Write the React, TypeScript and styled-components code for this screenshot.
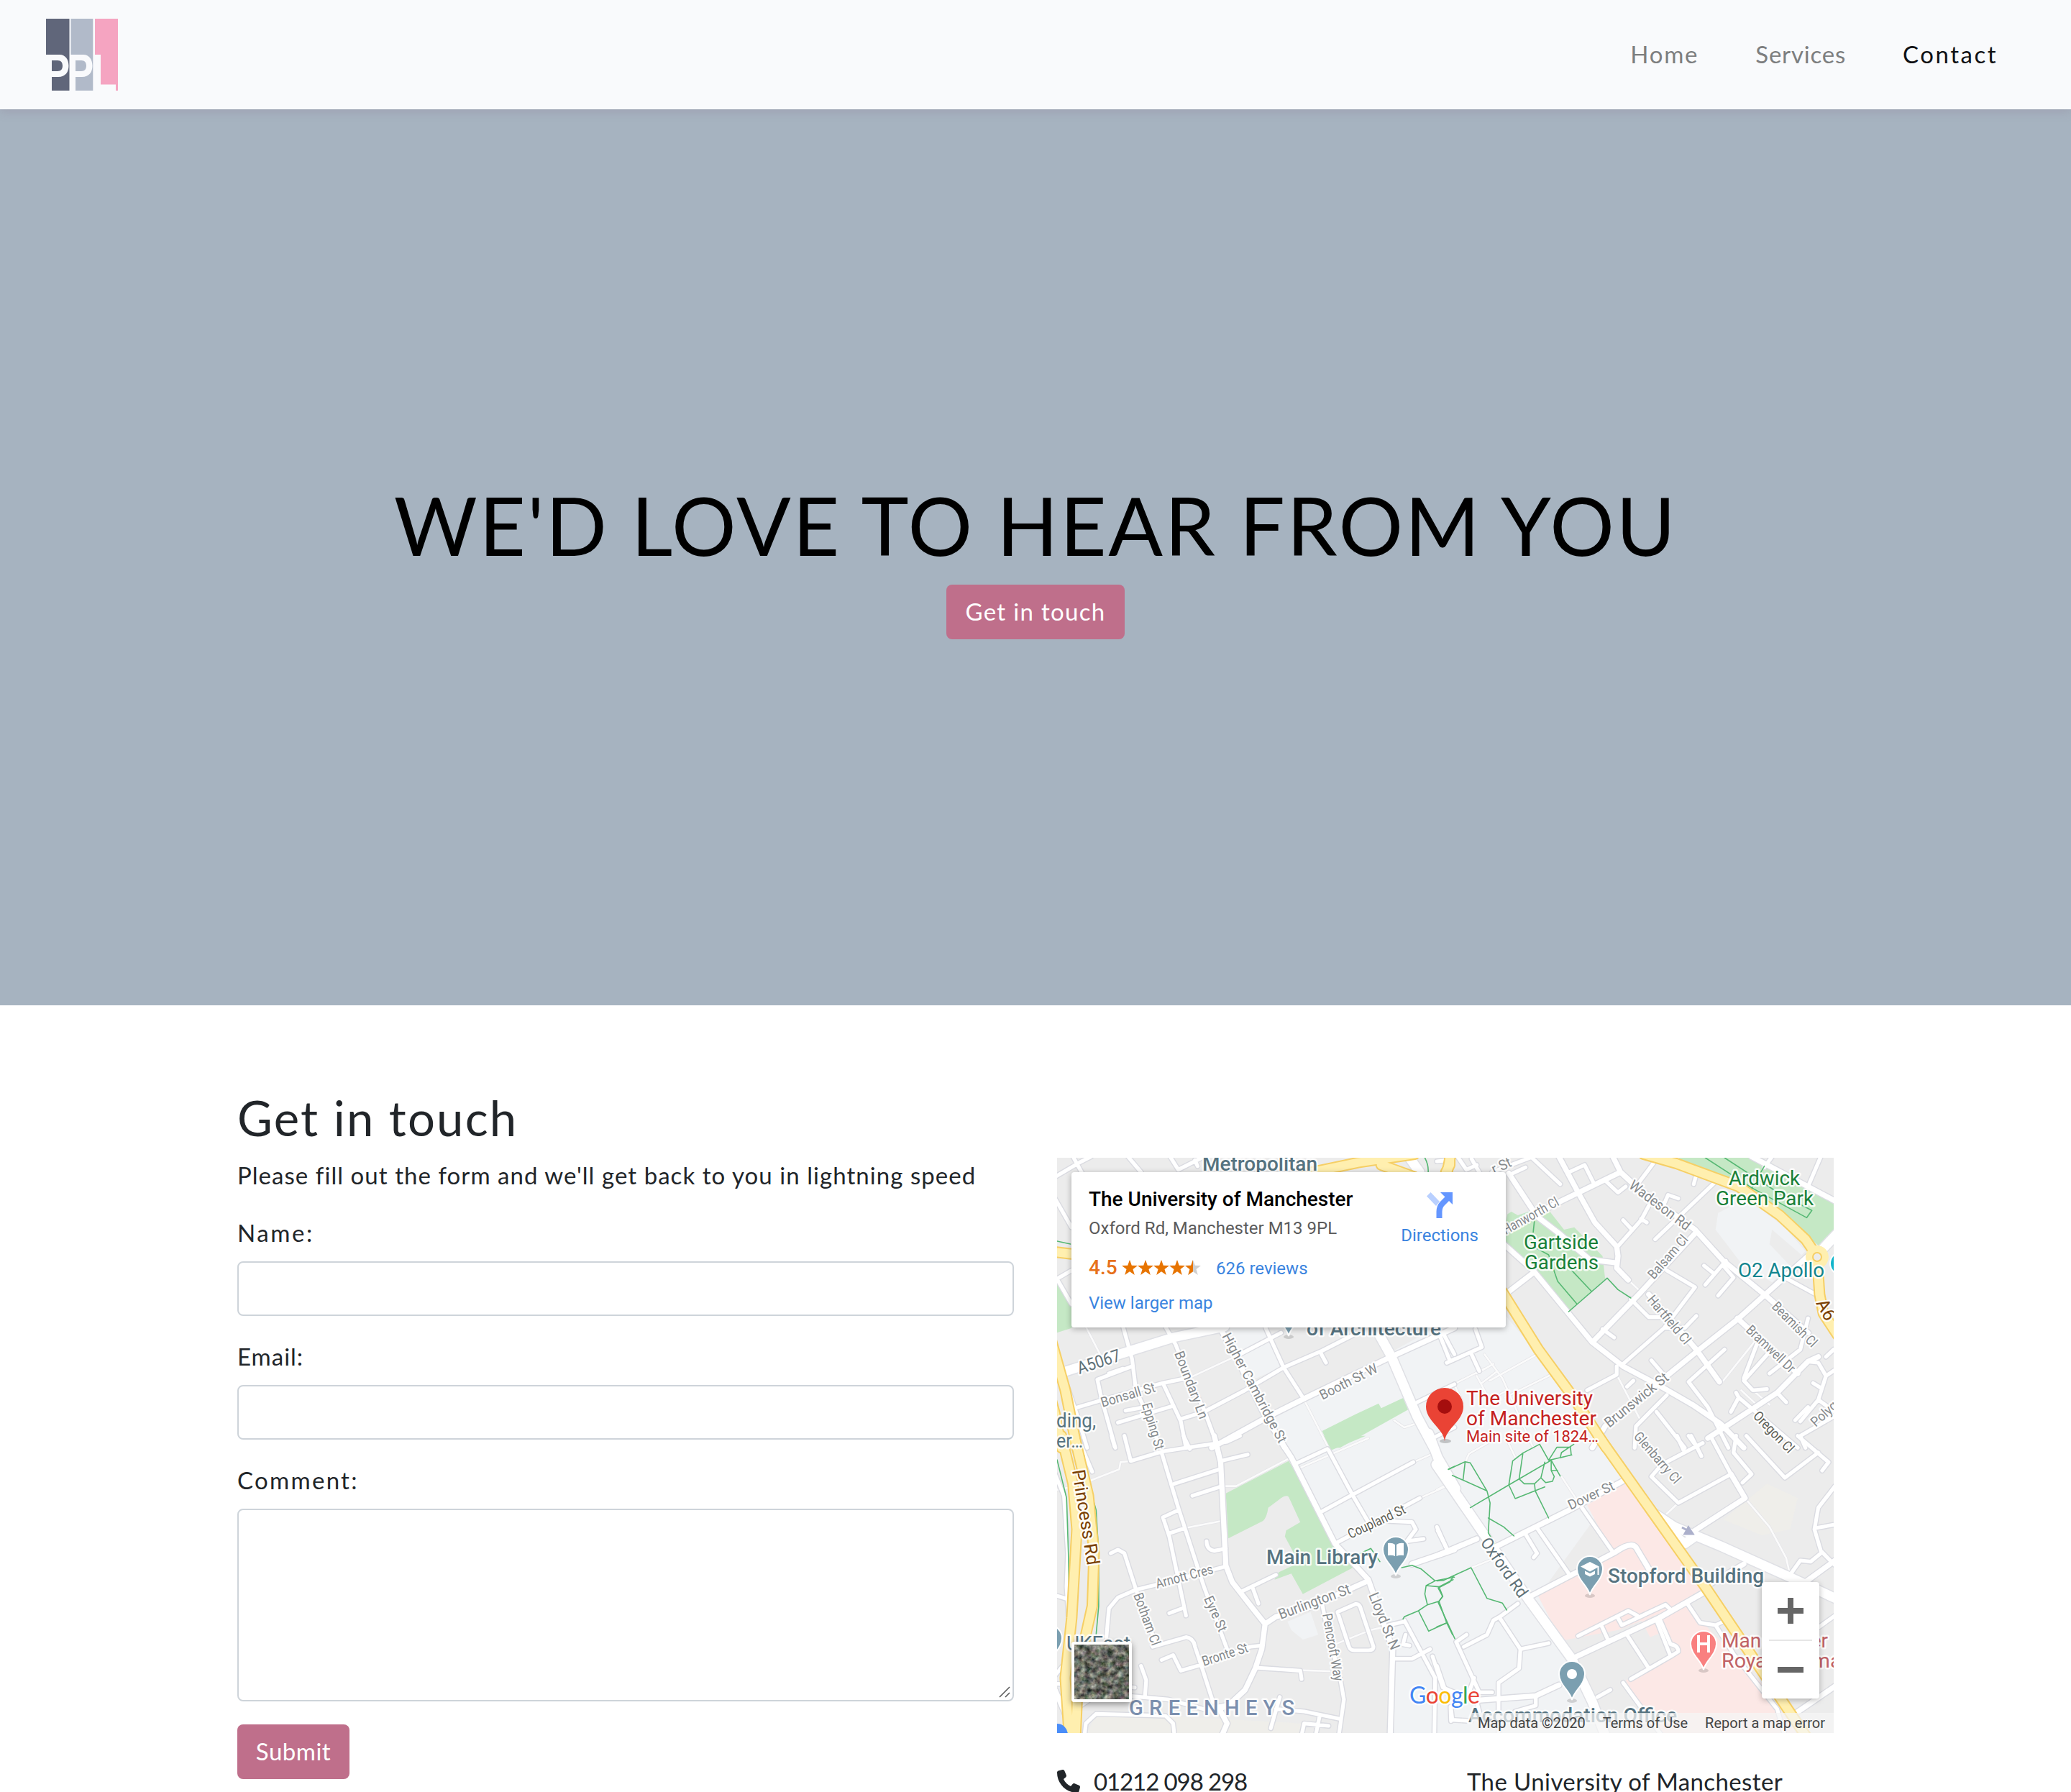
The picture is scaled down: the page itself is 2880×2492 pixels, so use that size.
import React from 'react';
import styled, { createGlobalStyle } from 'styled-components';
import { FaPhone } from 'react-icons/fa6';

const GlobalStyle = createGlobalStyle`
  *, *::before, *::after { box-sizing: border-box; }
  body { margin: 0; background: #fff; color: #212529; font-family: Lato, sans-serif; font-size: 33px; line-height: 48px; }
  h1, h2, p { margin: 0; font-weight: 400; }
`;

const Page = styled.div`
  height: 2492px;
  overflow: hidden;
  display: flex;
  flex-direction: column;
`;

/* ---------- navigation ---------- */

const Navbar = styled.header`
  position: relative;
  z-index: 2;
  flex: none;
  height: 152px;
  padding: 0 102px 0 64px;
  display: flex;
  align-items: center;
  justify-content: space-between;
  background: #f9fafc;
  box-shadow: 0 4px 12px rgba(130, 105, 130, 0.22);
`;

const NavLinks = styled.nav`
  display: flex;
  gap: 79px;
  padding-bottom: 2px;
`;

const NavLink = styled.a<{ $active?: boolean; $track: number }>`
  color: ${(p) => (p.$active ? '#101114' : '#7d7e7f')};
  letter-spacing: ${(p) => p.$track}px;
  text-decoration: none;
`;

const Logo = () => (
  <svg width="100" height="100" viewBox="0 0 100 100">
    <rect x="0" y="0" width="32.5" height="100" fill="#60667a" />
    <rect x="34.5" y="0" width="30.8" height="100" fill="#b1bac9" />
    <rect x="68" y="0" width="32" height="100" fill="#f5a4c1" />
    <g fill="#f9fafc" fillRule="evenodd">
      <path d="M0 50H19C27 50 31.5 57 31.5 65.500S27 81 17 81H8V100H0Z M8 58V73H16C21 73 23 70 23 65.500S21 58 16 58Z" />
      <path d="M33 50H52C60 50 64.500 57 64.500 65.500S60 81 50 81H41V100H33Z M41 58V73H49C54 73 56 70 56 65.500S54 58 49 58Z" />
      <path d="M67 50H76V91.500H97V100H67Z" />
    </g>
  </svg>
);

/* ---------- hero ---------- */

const Hero = styled.section`
  flex: none;
  height: 1246px;
  display: flex;
  flex-direction: column;
  align-items: center;
  justify-content: center;
  gap: 16px;
  background: #a6b3c0;
`;

const HeroTitle = styled.h1`
  color: #000;
  font-size: 112px;
  line-height: 135px;
  letter-spacing: 2.55px;
  white-space: nowrap;
`;

const Button = styled.button<{ $width: number; $track: number }>`
  display: block;
  width: ${(p) => p.$width}px;
  height: 76px;
  padding: 0 0 2px;
  border: 0;
  border-radius: 8px;
  background: #bf6f8b;
  color: #fff;
  font: inherit;
  letter-spacing: ${(p) => p.$track}px;
`;

/* ---------- contact section ---------- */

const Contact = styled.section`
  flex: none;
  width: 2220px;
  margin: 0 auto;
  padding-top: 118px;
  display: grid;
  grid-template-columns: 1080px 1080px;
  column-gap: 60px;
`;

const Column = styled.div<{ $offset?: number }>`
  padding-top: ${(p) => p.$offset ?? 0}px;
`;

const Title = styled.h2`
  margin-bottom: 17px;
  font-size: 67px;
  line-height: 77px;
  letter-spacing: 2.2px;
`;

const Lead = styled.p`
  margin-bottom: 32px;
  letter-spacing: 1.05px;
  white-space: nowrap;
`;

const Field = styled.div`
  margin-bottom: 32px;
`;

const Label = styled.label<{ $track: number }>`
  display: block;
  margin-bottom: 16px;
  letter-spacing: ${(p) => p.$track}px;
`;

const Input = styled.input`
  display: block;
  width: 100%;
  height: 76px;
  border: 2px solid #ced4da;
  border-radius: 8px;
  background: #fff;
`;

const CommentBox = styled.div`
  height: 268px;
  border: 2px solid #ced4da;
  border-radius: 8px;
  display: flex;
  align-items: flex-end;
  justify-content: flex-end;
  padding: 0 3px 3px 0;
`;

const Details = styled.div`
  margin-top: 43px;
  display: grid;
  grid-template-columns: 570px 510px;
`;

const Detail = styled.div<{ $track: number }>`
  display: flex;
  align-items: center;
  gap: 19px;
  letter-spacing: ${(p) => p.$track}px;
  white-space: nowrap;
`;

/* ---------- map ---------- */

const MapFrame = styled.div`
  position: relative;
  width: 1080px;
  height: 800px;
  overflow: hidden;
  background: #ececec;
  font-family: Roboto, sans-serif;
`;

const MapCanvas = styled.svg`
  display: block;
  font-family: Roboto, sans-serif;
`;

const InfoCard = styled.div`
  position: absolute;
  left: 20px;
  top: 20px;
  width: 604px;
  height: 216px;
  padding: 20px 38px 0 24px;
  display: flex;
  justify-content: space-between;
  background: #fff;
  border-radius: 4px;
  box-shadow: 0 2px 8px rgba(0, 0, 0, 0.3);
`;

const PlaceInfo = styled.div`
  display: flex;
  flex-direction: column;
  white-space: nowrap;
`;

const PlaceName = styled.div`
  color: #000;
  font-size: 28px;
  font-weight: 500;
  line-height: 36px;
`;

const Address = styled.div`
  margin-top: 6px;
  color: #5b5b5b;
  font-size: 24px;
  line-height: 32px;
`;

const RatingRow = styled.div`
  height: 34px;
  margin-top: 22px;
  display: flex;
  align-items: center;
`;

const Score = styled.span`
  width: 46px;
  color: #e7711b;
  font-size: 28px;
  font-weight: 500;
`;

const MapLink = styled.a<{ $left?: number; $top?: number }>`
  margin-left: ${(p) => p.$left ?? 0}px;
  margin-top: ${(p) => p.$top ?? 0}px;
  color: #3a84df;
  font-size: 24px;
  line-height: 32px;
  text-decoration: none;
`;

const DirectionsBox = styled.div`
  padding-top: 8px;
  display: flex;
  flex-direction: column;
  align-items: center;
`;

const SatelliteThumb = styled.div`
  position: absolute;
  left: 20px;
  top: 673px;
  width: 84px;
  height: 84px;
  border: 4px solid #fff;
  border-radius: 4px;
  overflow: hidden;
  box-shadow: 0 3px 10px rgba(0, 0, 0, 0.4);
`;

const ZoomBox = styled.div`
  position: absolute;
  left: 980px;
  top: 590px;
  width: 80px;
  height: 162px;
  border-radius: 4px;
  background: #fff;
  box-shadow: 0 2px 8px rgba(0, 0, 0, 0.28);
  display: flex;
  flex-direction: column;
  align-items: center;
`;

const ZoomKey = styled.div`
  height: 80px;
  display: flex;
  align-items: center;
`;

const ZoomRule = styled.div`
  width: 60px;
  height: 2px;
  background: #e6e6e6;
`;

const MapFooter = styled.div`
  position: absolute;
  right: 0;
  bottom: 0;
  height: 28px;
  padding: 0 12px 0 10px;
  display: flex;
  gap: 24px;
  background: rgba(245, 245, 245, 0.72);
  color: #444;
  font-size: 20px;
  line-height: 28px;
  white-space: nowrap;
`;

/* Road geometry is kept per tile, in tile units (2.8 by 3 units to a pixel). */
type Tile = {
  x: number;
  y: number;
  campus?: string;
  shade?: string;
  health?: string;
  sand?: string;
  park?: string;
  lanes: string;
  streets: string;
  avenues: string;
  highways: string;
  trunk?: string;
  paths: string;
};

const tiles: Tile[] = [
  {
    x: -10,
    y: -10,
    campus: 'M700 740L850 740 915 900 780 960 720 860Z M850 1100L1000 1035 1568 700V1240H920Z',
    park: 'M28 545L85 640V740L28 760Z M1060 1170L1190 1100 1280 1055 1290 1075 1380 1030 1400 1078 1130 1240H1090Z',
    lanes: 'M140 735L200 860 M540 950L740 850 M985 1030L1085 1240 M1340 1125L1380 1155 1450 1130',
    streets:
      'M20 110L115 50 160 25 M90 25L200 240 M300 20L355 90 M465 20L500 80 600 25 M565 40L575 65 M20 200L84 320 M20 540L84 500 M30 540L84 640 M285 735L320 870 335 1000 370 1080 430 1240 M450 735L490 810 540 950 600 1080 655 1240 M55 945L105 1100 145 1240 M80 1080L190 1045 440 970 530 950 M740 850L900 760 M320 900L185 955 200 1030 255 1240 M285 910L230 930 M440 970L510 1130 530 1240 M265 1135L480 1065 M295 1085L370 1070 M510 1120L600 1090 760 1000 910 905 1060 835 1180 770 M840 740L910 905 985 1030 M1055 845L1075 885 M1530 760L1575 850 M1430 1050L1575 975 M1490 1200L1575 1155 M1545 885L1575 870',
    avenues: 'M660 735L720 850 830 1090 915 1240 M630 1240L850 1110 1000 1030 1320 865 1575 740',
    trunk: 'M20 935L300 840 480 780 680 735 M1265 735L1330 860 1430 1110 1495 1240 M1400 30L1440 90',
    highways: 'M10 422L90 432 M1000 95L1200 50 1420 15 M1290 60L1420 110 M1560 20L1545 100 M5 790L60 1000 105 1240 M-30 900L20 1100 45 1240',
    paths: 'M28 378L80 390 M1460 30Q1475 60 1473 90',
  },
  {
    x: 530,
    y: -10,
    campus: 'M-10 740L263 690 390 850 520 1010 640 1240H-10Z M1090 260L1200 200 1350 320 1430 420 1300 550 1180 470 1080 330Z',
    shade: 'M1300 330L1420 440 1370 480 1290 390Z',
    park:
      'M270 265L285 255 310 270 420 230 440 262 490 330 530 320 640 440 650 535 508 672 375 510 263 395V300Z M930 25H1250L1540 220V350L1490 405 1290 220 1130 130 990 70Z',
    lanes: 'M180 850L250 950 370 1240 M-5 1010L180 910 M200 960L385 850 M260 1030L440 935 M150 930L215 890 M60 970L95 1050 M150 940L200 1040 270 1000 M170 970L230 920 M700 500L790 590 M695 935L790 1130 M1230 800L1110 960 M1220 995L1290 1060 M1180 1000L1240 1060',
    streets:
      'M-5 45L40 40 M75 25L110 80 M130 35L165 100 M110 80L150 60 M210 90L370 25 M360 25L475 140 M290 95L340 70 M510 90L570 60 605 135 M650 125L700 175 730 150 M840 50L770 150 M820 230L790 290 695 405 M720 290L750 325 M790 285L812 300 M1080 130L845 370 M935 200L895 185 875 235 M1005 100L995 140 M1490 25L1440 150 M1300 25L1270 70 M720 890L880 740 1000 570 890 500 M750 620L820 695 860 695 M640 745L685 780 M1005 690L960 740 880 740 M830 875L890 950 M1115 830L975 965 1050 1070 1130 1240 M1120 460L1040 560 M1035 480L1070 510 M1110 480L1150 530 1090 605 M1240 810L1190 950 M1290 840L1190 960 1225 1000 1280 995 M1440 700L1410 830 1290 930 M1540 830L1510 860 M1440 880L1480 885 1510 940 1480 1040 1545 1090 M1510 940L1545 915 M1460 970L1490 990 M1440 1070L1390 1125 M1480 1040L1410 1130 M1160 1010L1170 1030 1400 1240 M1170 1030L1140 1090 M1320 1010L1355 1050 M1350 530L1470 600 M1540 1110L1410 1190 1430 1240 M580 1000L695 935V900 M760 960L735 985 M890 1020L770 1150 765 1240 M850 1090L960 1240 M975 1190L1010 1240 M-5 740L45 875 M35 885L170 820 145 745 M130 850L160 920 M410 250L260 340',
    avenues:
      'M275 95L385 275 470 345 590 455 690 468 M470 25L545 175 610 300 695 400 700 440 695 490 740 540 M263 330L480 210 710 90 M680 25L710 90 770 150 1000 330 1110 460 1270 600 1440 760 M1545 210L1220 25 M255 605L370 510 M255 390L370 500 600 800 720 900 860 980 990 1060 1100 1140 1190 1240 M600 800L790 590 1005 340 M820 600L1005 830 1095 965 M1440 440L1170 700 1005 840 890 940 650 1150 600 1240 M1165 700L1400 930 M1480 860L1440 880 1320 1010 1050 1200',
    highways: 'M250 590L390 830 520 1020 655 1240 M800 15L930 55 1170 150 1330 270 1430 370 1475 440 M1475 440L1485 600 1500 680 1555 770 M45 15L45 60 30 90',
    trunk: 'M1480 430L1550 350',
    paths:
      'M375 290L370 340 M370 400L430 435 465 545 540 640 M520 500L595 585 M508 672L658 532 700 580 750 615 M1040 30L1220 155 1435 280 1455 250 1330 180 1115 30 M1270 65L1215 170',
  },
  {
    x: -10,
    y: 390,
    campus: 'M890 0L940 80 1110 440 1240 590 1340 880 1330 1240H1580V0Z M925 765L1015 725 1045 820 985 840 940 800Z',
    sand: 'M180 1155L480 1160 980 1190 970 1240H140Z',
    park:
      'M1065 -10H1230L1095 50Z M685 230L930 95 1180 540 985 650 940 565 875 590 890 560 970 520 915 410 920 385 975 350 930 245Q920 235 900 250L850 290Q845 330 830 345L695 418Z',
    lanes:
      'M28 215L80 205 M150 180L270 130 275 100 315 95 M670 200L725 200 930 85 M525 375L670 345 M960 130L1240 0 M1415 100L1490 65 M1110 860L1250 800 1390 765 M975 968L1090 972 M1440 250L1545 200',
    streets:
      'M105 -10L165 140 M20 150L55 240 70 480 65 620 75 780 M20 655L65 670 M290 -10L315 95 440 55 530 40 690 15 740 -10 M520 -10L545 45 M240 -10L252 35 M435 60L500 290 600 620 690 880 M665 95L770 68 M485 190L660 130 M555 240L670 200 M500 300L440 330 465 410 530 740 M470 395L525 375 M610 430Q610 465 640 470L685 460 M237 480L265 465 290 480 335 630 410 850 M220 830L230 710 265 665 335 632 420 610 685 535 M465 730L515 710 M400 870L530 830Q560 835 565 870L590 950 635 1100 M435 925L480 905 510 970 590 945 780 870 825 865 M745 640L880 570 M790 625L812 690 M800 957L975 970 980 1005 M1060 690L1080 800 1130 1000 1145 1090 1125 1240 M1120 725L1190 692Q1205 690 1210 710L1260 870Q1260 885 1240 885H1185Q1170 885 1165 870Z M355 950L375 1010 370 1080 M310 1075L460 1090 600 1130 700 1110 M895 1080L860 1210 M880 1130L990 1140 1125 1170 M1050 1160L1035 1240 M980 1240L990 1190 1085 1200 M960 105L1080 45 M1085 50L1180 240 1240 350 M1060 305L1180 235 1415 100 M1110 440L1180 400 1440 250 M1310 345L1410 350 1425 380 1390 430 1455 420 M1510 385L1545 460 M1380 760L1500 1000 1497 1240 M1490 910L1530 1040 1575 1060 M1340 920L1410 920 1480 880 M1385 820L1375 860 1400 865 M1380 765L1320 780 M135 1240L140 1190 180 1150 450 1158 480 1190 485 1240 M20 1025L40 1025 M20 990L50 950 M280 1035L330 1040 M100 1130L170 1080 310 1075 M1560 1120L1562 1180',
    avenues:
      'M640 -10L665 100 685 530 710 600 790 710 838 775 825 880 800 960 760 1050 700 1110 660 1130 690 1190 670 1240 M838 775L880 745 1000 710 1240 595 M885 -10L940 80 1110 440 1240 590 1335 880 1325 1240 M1410 525L1575 465 M20 1050L60 1150',
    highways:
      'M45 -10L90 190 105 380 85 750 60 1000 75 1240 M95 -10L150 240 172 480 165 700 140 820 110 1000 100 1240',
    trunk: 'M1475 -20L1510 80 1580 210',
    paths:
      'M28 90L65 250 72 480 75 680 M135 75L130 110 180 300 190 480V700L180 820 M1200 485L1250 460 1285 515 M1370 540L1410 530 1445 545 1500 595 1575 580 M1500 595L1465 615 1460 650 1470 695 1515 680 1530 660 1515 620 1465 615 M1515 620L1570 590 M1375 755L1380 745 1435 720 1470 695 M1435 720L1475 805 1545 770 1515 680 M1545 770L1568 820 M1552 130L1575 118',
  },
  {
    x: 530,
    y: 390,
    campus: 'M-10 -10H640L720 170 390 660 520 920 640 1240H-10Z',
    sand: 'M1110 340L1280 190 1400 250 1370 380 1260 405Z',
    health:
      'M580 280L725 180 1040 620 890 720 700 800 480 845 390 660 510 580 680 480Z M790 760L860 740 1040 650 970 690 1040 780 1110 860 1250 1010 1330 1130 1400 1240H860L730 1010 930 900 860 760 870 810 825 830Z',
    lanes:
      'M480 160L560 290 M260 -10L300 80 M105 100L120 65 240 -10 M1195 250L1290 370 1355 500 1370 570 M890 315L935 270 M-5 215L40 190 M130 540L210 505 M100 870L190 820',
    streets:
      'M-5 370L35 465 M340 400L385 480 372 497 M385 375L515 575 M560 290L680 475 M545 825L740 720 775 740 M635 780L665 850 M700 750L715 780 885 695 905 715 M735 820L820 960 M865 760L905 860 Q935 865 935 890L905 910 750 1005 M850 760L905 910 M620 1080L670 1050 M720 1020L870 1240 M970 690L1020 770 1080 780 1110 765 M1080 780L1150 900 1320 1130 1350 1240 M830 160L935 270 1140 150 M830 160L870 110 1030 20 M1060 -10L1140 150 M1160 -10L1150 60 1220 150 1185 185 M930 -10L955 50 M985 -10L1025 75 M1200 -10L1350 165 1480 60 M1400 -10L1520 100 1495 135 M1545 200L1480 290 1465 380 1490 470 1545 530 M1470 375L1545 360 M1370 570L1410 510 1450 515 1490 480 M1545 740L1480 790 M240 750L320 880 430 855 M320 880L315 960 235 1020V1240 M100 870L190 820 215 760 240 745 310 690 M70 850L160 1060H210 M70 850L110 820 M-5 950L30 1060 M380 1075V1115L300 1140 M50 1130L55 1175 130 1180 M140 1000L120 1060 M150 1100L165 1160',
    avenues:
      'M-5 490L150 420 M220 455L510 300 725 175 M350 665L690 475 Q750 430 770 455L820 545 M520 920L860 750 1040 640 M1140 150L1195 250 1000 385 M1430 600L1545 510 M1040 620L1190 525 M1395 1145L1545 1035 M130 1095L380 1075 470 1030',
    highways: 'M623 -10L1040 620 1430 1240',
    trunk: 'M-8 110L350 670 520 920 600 1100 650 1240 M850 320L920 370 1100 450 1370 580 1560 675 M900 390L960 440 1000 410',
    paths:
      'M40 130L105 98 125 103 190 220 202 270 195 395 220 440 M105 98L97 172 M55 155L190 220 M125 290L275 195 440 92 M195 333L255 370 295 408 M395 25L430 92 462 38H515L518 70 475 82 480 60 528 25 M430 92L520 70 M440 92L475 158 M395 25L330 62 290 95 275 195 300 252 415 203 M330 62L315 170 335 190H375L400 165 418 185 445 180 452 160 440 135 440 92 M440 135H465 M375 190L378 220 430 333 M415 100L400 165 M-5 595L20 593 128 540 190 668 250 688 267 717 M60 575L45 600 0 625 17 660 0 685 65 837 M-5 787L35 770',
  },
];

const Stroke = styled.path<{ $color: string; $width: number }>`
  fill: none;
  stroke: ${(p) => p.$color};
  stroke-width: ${(p) => p.$width}px;
  stroke-linecap: round;
  stroke-linejoin: round;
  vector-effect: non-scaling-stroke;
`;

const Area = styled.path<{ $color: string }>`
  fill: ${(p) => p.$color};
`;

const layers: [keyof Tile, string, number][] = [
  ['lanes', '#e4e4e8', 4],
  ['lanes', '#fbfbfb', 2.6],
  ['streets', '#dadbe1', 8],
  ['avenues', '#dadbe1', 10],
  ['trunk', '#dfe0e5', 16],
  ['streets', '#ffffff', 5.2],
  ['avenues', '#ffffff', 7.2],
  ['trunk', '#ffffff', 13],
  ['paths', '#56b873', 1.6],
  ['highways', '#f6cf65', 16],
  ['highways', '#ffefaf', 12],
];

const areas: [keyof Tile, string][] = [
  ['campus', '#f1f3f5'],
  ['shade', '#ececec'],
  ['sand', '#efeeea'],
  ['health', '#fce8e6'],
  ['park', '#c5e8c5'],
];

const place = (t: Tile) => `translate(${t.x} ${t.y}) scale(${1 / 2.8} ${1 / 3})`;

const Halo = styled.text<{ $color: string; $size: number; $weight?: number }>`
  fill: ${(p) => p.$color};
  font-size: ${(p) => p.$size}px;
  font-weight: ${(p) => p.$weight ?? 400};
  stroke: rgba(255, 255, 255, 0.85);
  stroke-width: 5px;
  stroke-linejoin: round;
  paint-order: stroke;
`;

/* text, x, y, angle, length, size, colour */
type RoadName = [string, number, number, number, number, number?, string?];

const roadNames: RoadName[] = [
  ['A5067', 31, 301, -18, 62, 24, '#5f7178'],
  ['Bonsall St', 63, 347, -16.5, 78],
  ['Epping St', 118, 343, 73.5, 67],
  ['Boundary Ln', 163, 272, 69, 99],
  ['Higher Cambridge St', 229, 248, 62, 170],
  ['Booth St W', 369, 337, -27, 88],
  ['Coupland St', 408, 530, -25, 86, 19, '#5c5d55'],
  ['Arnott Cres', 139, 599, -15, 82],
  ['Botham Cl', 106, 608, 70, 76],
  ['Eyre St', 204, 613, 66, 52],
  ['Burlington St', 311, 642, -20.5, 105, 20],
  ['Bronte St', 204, 707, -18, 66],
  ['Lloyd St N', 433, 608, 68, 84, 20],
  ['Pencroft Way', 369, 635, 80, 95],
  ['Princess Rd', 21, 435, 81, 134, 25, '#7a4000'],
  ['Oxford Rd', 588, 535, 55, 96, 23, '#5f7178'],
  ['Dover St', 714, 490, -25, 69],
  ['Glenbarry Cl', 801, 388, 49, 88],
  ['Brunswick St', 768, 376, -39, 108, 20],
  ['Hartfield Cl', 820, 198, 50, 82],
  ['Balsam Cl', 830, 170, -49, 74],
  ['Hanworth Cl', 624, 107, -29, 86],
  ['Wadeson Rd', 794, 41, 37, 101, 20],
  ['Beamish Cl', 993, 208, 45, 80],
  ['Bramwell Dr', 957, 241, 43.5, 86],
  ['Oregon Cl', 967, 360, 46, 72, 19, '#5c5d55'],
  ['Polygon', 1055, 375, -42, 62],
  ['A6', 1055, 202, 62, 30, 25, '#7a4000'],
  ['r St', 608, 23, -25, 28, 20],
];

/* text, x, y, length, size, colour, weight */
type PlaceLabel = [string, number, number, number, number, string, number?];

const slate = '#567380';
const placeLabels: PlaceLabel[] = [
  ['Metropolitan', 202, 18, 160, 28, slate, 500],
  ['of Architecture', 347, 247, 187, 28, slate, 500],
  ['Main Library', 291, 565, 155, 28, slate, 500],
  ['Stopford Building', 766, 591, 217, 28, slate, 500],
  ['Accommodation Office', 572, 785, 290, 28, slate, 500],
  ['GREENHEYS', 100, 775, 230, 29, '#7b8fae', 500],
  ['ding,', -1, 375, 55, 28, slate],
  ['er…', -1, 403, 37, 28, slate],
  ['UKFast', 13, 685, 89, 28, slate],
  ['Ardwick', 934, 38, 99, 28, '#188038'],
  ['Green Park', 916, 66, 136, 28, '#188038'],
  ['Gartside', 649, 127, 104, 28, '#188038'],
  ['Gardens', 650, 155, 103, 28, '#188038'],
  ['O2 Apollo', 947, 166, 120, 28, '#12858f'],
  ['The University', 569, 344, 176, 28, '#c5221f'],
  ['of Manchester', 569, 372, 181, 28, '#c5221f'],
  ['Main site of 1824…', 569, 395, 184, 22, '#c5221f'],
  ['Manchester', 924, 681, 148, 28, '#c06266'],
  ['Royal Infirmary', 924, 709, 190, 28, '#c06266'],
];

const Pin = ({ x, y, color, children }: { x: number; y: number; color: string; children?: React.ReactNode }) => (
  <g transform={`translate(${x} ${y})`}>
    <ellipse cx="0" cy="37" rx="7" ry="3" fill="rgba(0,0,0,.14)" />
    <path d="M0 36C-2 24 -18 15 -18 0A18 18 0 0 1 18 0C18 15 2 24 0 36Z" fill={color} stroke="#fff" strokeWidth="2" />
    {children}
  </g>
);

const CityMap = () => (
  <MapCanvas width="1080" height="800" viewBox="0 0 1080 800">
    <rect width="1080" height="800" fill="#ececec" />
    {areas.map(([key, color]) =>
      tiles.map((t, i) =>
        t[key] ? <Area key={`${key}${i}`} d={String(t[key])} transform={place(t)} $color={color} /> : null,
      ),
    )}
    {layers.map(([key, color, width], n) =>
      tiles.map((t, i) =>
        t[key] ? (
          <Stroke key={`${n}-${i}`} d={String(t[key])} transform={place(t)} $color={color} $width={width} />
        ) : null,
      ),
    )}
    <circle cx="1057" cy="138" r="12" fill="#ffefaf" stroke="#ffefaf" strokeWidth="8" />
    <circle cx="1057" cy="138" r="6" fill="#ececec" stroke="#f6cf65" strokeWidth="2" />
    <path d="M869 514L878 519M878 514L884 523 873 523Z" fill="#acb0cb" stroke="#acb0cb" strokeWidth="3" />
    {roadNames.map(([text, x, y, angle, length, size = 19, color = '#85898c']) => (
      <Halo
        key={text}
        $color={color}
        $size={size}
        textLength={length}
        lengthAdjust="spacingAndGlyphs"
        transform={`translate(${x} ${y}) rotate(${angle})`}
      >
        {text}
      </Halo>
    ))}
    <Pin x={322} y={212} color="#7b9fb0" />
    <Pin x={-11} y={668} color="#7b9fb0" />
    <Pin x={471} y={545} color="#7b9fb0">
      <path d="M-11 -9Q-5 -10 -1 -7V9Q-5 7 -11 8ZM11 -9Q5 -10 1 -7V9Q5 7 11 8Z" fill="#fff" />
    </Pin>
    <Pin x={741} y={572} color="#7b9fb0">
      <path d="M0 -10L13 -3.500 0 3.500 -13 -3.500Z" fill="#fff" />
      <path d="M-7 2.500L0 6 7 2.500V7L0 10.500 -7 7Z" fill="#fff" />
      <path d="M11.500 -3V8" stroke="#fff" strokeWidth="2" />
    </Pin>
    <Pin x={716} y={718} color="#7b9fb0">
      <circle r="7" fill="#fff" />
    </Pin>
    <Pin x={899} y={676} color="#f98080">
      <path d="M-7 -12V12M7 -12V12M-7 0H7" stroke="#fff" strokeWidth="4" />
    </Pin>
    <circle cx="1091" cy="147" r="16" fill="#12b5cb" stroke="#fff" strokeWidth="2" />
    <circle cx="0" cy="802" r="15" fill="#4a8df8" />
    {placeLabels.map(([text, x, y, length, size, color, weight]) => (
      <Halo
        key={text}
        x={x}
        y={y}
        $color={color}
        $size={size}
        $weight={weight}
        textLength={length}
        lengthAdjust={text === 'GREENHEYS' ? 'spacing' : 'spacingAndGlyphs'}
      >
        {text}
      </Halo>
    ))}
    <ellipse cx="540" cy="394" rx="8" ry="3" fill="rgba(0,0,0,.2)" />
    <path d="M539 394C537 376 513 366 513 346A26 26 0 0 1 565 346C565 366 541 376 539 394Z" fill="#ea4335" />
    <circle cx="539" cy="346" r="10" fill="#a50e0e" />
    <Halo x={490} y={759} $color="#4285f4" $size={32} textLength={98} fontFamily="Lato, sans-serif" $weight={400}>
      G<tspan fill="#ea4335">o</tspan>
      <tspan fill="#fbbc04">o</tspan>g<tspan fill="#34a853">l</tspan>
      <tspan fill="#ea4335">e</tspan>
    </Halo>
  </MapCanvas>
);

const starPath = 'M11 0L13.800 7.800 22 8 15.500 13 17.800 21 11 16.300 4.200 21 6.500 13 0 8 8.200 7.800Z';

const Stars = () => (
  <svg width="110" height="22" viewBox="0 0 110 22">
    <defs>
      <clipPath id="half">
        <rect width="11" height="22" />
      </clipPath>
    </defs>
    {[0, 1, 2, 3, 4].map((i) => (
      <g key={i} transform={`translate(${i * 22} 0)`}>
        <path d={starPath} fill={i === 4 ? '#cfcfcf' : '#e77400'} />
        {i === 4 && <path d={starPath} fill="#e77400" clipPath="url(#half)" />}
      </g>
    ))}
  </svg>
);

const DirectionsIcon = () => (
  <svg width="36" height="36" viewBox="0 0 36 36">
    <path d="M0 5.500L5.500 0 18 13 13 19Z" fill="#b9d0ff" />
    <path d="M17.500 36V27Q17.500 20 22 15.500L29 8.500" fill="none" stroke="#6496ff" strokeWidth="8" />
    <path d="M19 0H36V17Z" fill="#6496ff" />
  </svg>
);

const SatelliteTexture = () => (
  <svg width="76" height="76" viewBox="0 0 76 76" display="block">
    <filter id="rooftops" x="0" y="0" width="100%" height="100%" colorInterpolationFilters="sRGB">
      <feTurbulence type="fractalNoise" baseFrequency="0.13" numOctaves="3" seed="11" />
      <feColorMatrix values="0.75 0.45 0.2 0 -0.29  0.6 0.6 0.2 0 -0.28  0.55 0.45 0.35 0 -0.29  0 0 0 0 1" />
    </filter>
    <rect width="76" height="76" fill="#626660" />
    <rect width="76" height="76" filter="url(#rooftops)" />
  </svg>
);

export default function App() {
  return (
    <Page>
      <GlobalStyle />
      <Navbar>
        <Logo />
        <NavLinks>
          <NavLink $track={1.75}>Home</NavLink>
          <NavLink $track={0.8}>Services</NavLink>
          <NavLink $track={2.5} $active>
            Contact
          </NavLink>
        </NavLinks>
      </Navbar>
      <Hero>
        <HeroTitle>WE'D LOVE TO HEAR FROM YOU</HeroTitle>
        <Button $width={248} $track={1.3}>
          Get in touch
        </Button>
      </Hero>
      <Contact>
        <Column>
          <Title>Get in touch</Title>
          <Lead>Please fill out the form and we'll get back to you in lightning speed</Lead>
          <Field>
            <Label $track={2.6}>Name:</Label>
            <Input />
          </Field>
          <Field>
            <Label $track={1}>Email:</Label>
            <Input />
          </Field>
          <Field>
            <Label $track={2.3}>Comment:</Label>
            <CommentBox>
              <svg width="16" height="16" viewBox="0 0 16 16">
                <path d="M1 15L15 1M9 15L15 9" stroke="#555" strokeWidth="1.5" />
              </svg>
            </CommentBox>
          </Field>
          <Button $width={156} $track={0.5}>
            Submit
          </Button>
        </Column>
        <Column $offset={94}>
          <MapFrame>
            <CityMap />
            <InfoCard>
              <PlaceInfo>
                <PlaceName>The University of Manchester</PlaceName>
                <Address>Oxford Rd, Manchester M13 9PL</Address>
                <RatingRow>
                  <Score>4.5</Score>
                  <Stars />
                  <MapLink $left={21} $top={2}>
                    626 reviews
                  </MapLink>
                </RatingRow>
                <MapLink $top={16}>View larger map</MapLink>
              </PlaceInfo>
              <DirectionsBox>
                <DirectionsIcon />
                <MapLink $top={8}>Directions</MapLink>
              </DirectionsBox>
            </InfoCard>
            <SatelliteThumb>
              <SatelliteTexture />
            </SatelliteThumb>
            <ZoomBox>
              <ZoomKey>
                <svg width="36" height="36" viewBox="0 0 36 36">
                  <path d="M18 0V36M0 18H36" stroke="#666" strokeWidth="8" />
                </svg>
              </ZoomKey>
              <ZoomRule />
              <ZoomKey>
                <svg width="36" height="36" viewBox="0 0 36 36">
                  <path d="M0 18H36" stroke="#666" strokeWidth="8" />
                </svg>
              </ZoomKey>
            </ZoomBox>
            <MapFooter>
              <span>Map data ©2020</span>
              <span>Terms of Use</span>
              <span>Report a map error</span>
            </MapFooter>
          </MapFrame>
          <Details>
            <Detail $track={-1.1}>
              <FaPhone size={32} />
              01212 098 298
            </Detail>
            <Detail $track={0.4}>The University of Manchester</Detail>
          </Details>
        </Column>
      </Contact>
    </Page>
  );
}
